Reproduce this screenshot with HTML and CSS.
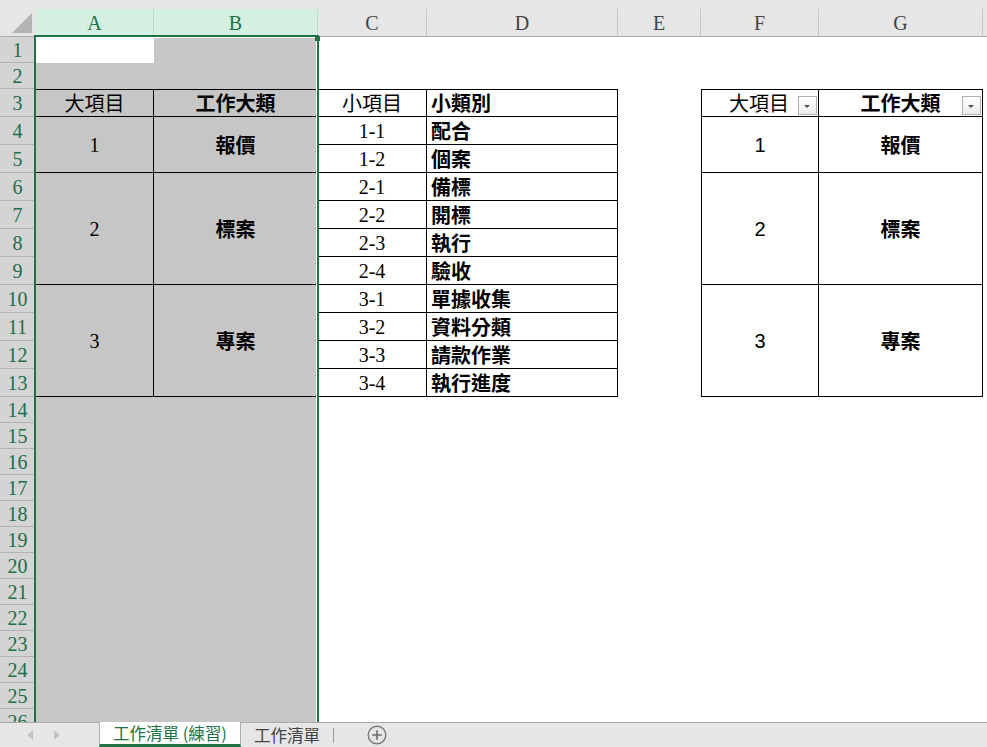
FILE: index.html
```html
<!DOCTYPE html>
<html lang="zh-Hant">
<head>
    <meta charset="UTF-8">
    <title>工作清單</title>
    <link rel="stylesheet" href="styles.css">
</head>
<body>
<div class="app">
    <div class="top-strip"></div>

    <!-- Sheet grid -->
    <div class="sheet-wrap">
        <table class="sheet">
            <colgroup>
                <col style="width:36px"><col style="width:118px"><col style="width:164px">
                <col style="width:109px"><col style="width:191px"><col style="width:83px">
                <col style="width:118px"><col style="width:164px"><col>
            </colgroup>
            <tr class="head">
                <th class="corner"><svg width="35" height="27" viewBox="0 0 35 27"><polygon points="12,24 32,24 32,4" fill="#b4b4b4"/></svg></th>
                <th class="col-sel">A</th>
                <th class="col-sel">B</th>
                <th>C</th>
                <th>D</th>
                <th>E</th>
                <th>F</th>
                <th>G</th>
                <th class="col-end"></th>
            </tr>
            <tr class="r26">
                <th class="row-num">1</th>
                <td class="active"></td><td class="sel"></td>
                <td></td><td></td><td></td><td></td><td></td><td></td>
            </tr>
            <tr class="r26">
                <th class="row-num">2</th>
                <td class="sel"></td><td class="sel"></td>
                <td></td><td></td><td></td><td></td><td></td><td></td>
            </tr>
            <tr class="r28">
                <th class="row-num">3</th>
                <td class="sel b bt ctr">大項目</td>
                <td class="sel b bt ctr strong">工作大類</td>
                <td class="b bt ctr">小項目</td>
                <td class="b bt left strong">小類別</td>
                <td></td>
                <td class="b bt bl right filtered">大項目<span class="filter-btn"></span></td>
                <td class="b bt ctr strong filtered">工作大類<span class="filter-btn"></span></td>
                <td></td>
            </tr>
            <tr class="r28">
                <th class="row-num">4</th>
                <td class="sel b ctr num" rowspan="2">1</td>
                <td class="sel b ctr strong" rowspan="2">報價</td>
                <td class="b ctr num">1-1</td>
                <td class="b left strong">配合</td>
                <td></td>
                <td class="b bl ctr sans-num" rowspan="2">1</td>
                <td class="b ctr strong" rowspan="2">報價</td>
                <td></td>
            </tr>
            <tr class="r28">
                <th class="row-num">5</th>
                <td class="b ctr num">1-2</td>
                <td class="b left strong">個案</td>
                <td></td><td></td>
            </tr>
            <tr class="r28">
                <th class="row-num">6</th>
                <td class="sel b ctr num" rowspan="4">2</td>
                <td class="sel b ctr strong" rowspan="4">標案</td>
                <td class="b ctr num">2-1</td>
                <td class="b left strong">備標</td>
                <td></td>
                <td class="b bl ctr sans-num" rowspan="4">2</td>
                <td class="b ctr strong" rowspan="4">標案</td>
                <td></td>
            </tr>
            <tr class="r28">
                <th class="row-num">7</th>
                <td class="b ctr num">2-2</td>
                <td class="b left strong">開標</td>
                <td></td><td></td>
            </tr>
            <tr class="r28">
                <th class="row-num">8</th>
                <td class="b ctr num">2-3</td>
                <td class="b left strong">執行</td>
                <td></td><td></td>
            </tr>
            <tr class="r28">
                <th class="row-num">9</th>
                <td class="b ctr num">2-4</td>
                <td class="b left strong">驗收</td>
                <td></td><td></td>
            </tr>
            <tr class="r28">
                <th class="row-num">10</th>
                <td class="sel b ctr num" rowspan="4">3</td>
                <td class="sel b ctr strong" rowspan="4">專案</td>
                <td class="b ctr num">3-1</td>
                <td class="b left strong">單據收集</td>
                <td></td>
                <td class="b bl ctr sans-num" rowspan="4">3</td>
                <td class="b ctr strong" rowspan="4">專案</td>
                <td></td>
            </tr>
            <tr class="r28">
                <th class="row-num">11</th>
                <td class="b ctr num">3-2</td>
                <td class="b left strong">資料分類</td>
                <td></td><td></td>
            </tr>
            <tr class="r28">
                <th class="row-num">12</th>
                <td class="b ctr num">3-3</td>
                <td class="b left strong">請款作業</td>
                <td></td><td></td>
            </tr>
            <tr class="r28">
                <th class="row-num">13</th>
                <td class="b ctr num">3-4</td>
                <td class="b left strong">執行進度</td>
                <td></td><td></td>
            </tr>
            <tr class="r26"><th class="row-num">14</th><td class="sel"></td><td class="sel"></td><td></td><td></td><td></td><td></td><td></td><td></td></tr>
            <tr class="r26"><th class="row-num">15</th><td class="sel"></td><td class="sel"></td><td></td><td></td><td></td><td></td><td></td><td></td></tr>
            <tr class="r26"><th class="row-num">16</th><td class="sel"></td><td class="sel"></td><td></td><td></td><td></td><td></td><td></td><td></td></tr>
            <tr class="r26"><th class="row-num">17</th><td class="sel"></td><td class="sel"></td><td></td><td></td><td></td><td></td><td></td><td></td></tr>
            <tr class="r26"><th class="row-num">18</th><td class="sel"></td><td class="sel"></td><td></td><td></td><td></td><td></td><td></td><td></td></tr>
            <tr class="r26"><th class="row-num">19</th><td class="sel"></td><td class="sel"></td><td></td><td></td><td></td><td></td><td></td><td></td></tr>
            <tr class="r26"><th class="row-num">20</th><td class="sel"></td><td class="sel"></td><td></td><td></td><td></td><td></td><td></td><td></td></tr>
            <tr class="r26"><th class="row-num">21</th><td class="sel"></td><td class="sel"></td><td></td><td></td><td></td><td></td><td></td><td></td></tr>
            <tr class="r26"><th class="row-num">22</th><td class="sel"></td><td class="sel"></td><td></td><td></td><td></td><td></td><td></td><td></td></tr>
            <tr class="r26"><th class="row-num">23</th><td class="sel"></td><td class="sel"></td><td></td><td></td><td></td><td></td><td></td><td></td></tr>
            <tr class="r26"><th class="row-num">24</th><td class="sel"></td><td class="sel"></td><td></td><td></td><td></td><td></td><td></td><td></td></tr>
            <tr class="r26"><th class="row-num">25</th><td class="sel"></td><td class="sel"></td><td></td><td></td><td></td><td></td><td></td><td></td></tr>
            <tr class="r26"><th class="row-num">26</th><td class="sel"></td><td class="sel"></td><td></td><td></td><td></td><td></td><td></td><td></td></tr>
        </table>

        <!-- selection outline over columns A:B -->
        <div class="selection"></div>
    </div>

    <!-- Sheet tabs -->
    <div class="tabbar">
        <div class="tab-nav">
            <svg width="8" height="10" viewBox="0 0 8 10"><polygon points="7,0 7,10 1,5" fill="#c3c3c3"/></svg>
            <svg width="8" height="10" viewBox="0 0 8 10"><polygon points="1,0 1,10 7,5" fill="#c3c3c3"/></svg>
        </div>
        <div class="tab active-tab">工作清單 (練習)</div>
        <div class="tab">工作清單</div>
        <div class="tab-sep"></div>
        <div class="add-sheet">
            <svg width="20" height="20" viewBox="0 0 20 20">
                <circle cx="10" cy="10" r="8.8" fill="none" stroke="#7a7a7a" stroke-width="1.4"/>
                <path d="M10 5.2V14.8M5.2 10H14.8" stroke="#6a6a6a" stroke-width="1.6"/>
            </svg>
        </div>
    </div>
</div>
</body>
</html>
```

FILE: styles.css
```css
* {
    box-sizing: border-box;
}
body {
    margin: 0;
    overflow: hidden;
    background: #fff;
    font-family: "Noto Sans CJK TC", sans-serif;
}
.app {
    display: flex;
    flex-direction: column;
    height: 747px;
}
.top-strip {
    flex: none;
    height: 9px;
    background: #e6e6e6;
}
.sheet-wrap {
    position: relative;
    flex: 1;
    overflow: hidden;
}
.sheet {
    width: 987px;
    table-layout: fixed;
    border-collapse: separate;
    border-spacing: 0;
}

/* column letters */
.head th {
    height: 27px;
    padding: 0;
    background: #e6e6e6;
    border-right: 1px solid #c6c6c6;
    border-bottom: 1px solid #ababab;
    font: normal 20px/24px "Liberation Serif", serif;
    color: #444;
    vertical-align: middle;
}
.head th.corner {
    border-right: none;
    line-height: 0;
    text-align: left;
}
.head th.col-sel {
    background: #d3f0e0;
    color: #217346;
    border-right-color: #b9dcc7;
}
.head th.col-end {
    border-right: none;
}

/* row numbers */
.row-num {
    padding: 0 1px 0 0;
    background: #d4d4d4;
    border-bottom: 1px solid #b3b3b3;
    font: normal 20px/22px "Liberation Serif", serif;
    color: #1e6e4a;
    text-align: center;
    vertical-align: middle;
}
.r26 {
    height: 26px;
}
.r28 {
    height: 28px;
}

/* cells */
td {
    padding: 0 4px;
    font-size: 20px;
    line-height: 22px;
    color: #000;
    vertical-align: middle;
    white-space: nowrap;
}
td.sel {
    background: #c6c6c6;
}
td.active {
    background: #fff;
}
td.b {
    border-right: 1px solid #000;
    border-bottom: 1px solid #000;
}
td.bt {
    border-top: 1px solid #000;
}
td.bl {
    border-left: 1px solid #000;
}
.ctr {
    text-align: center;
}
.left {
    text-align: left;
}
.right {
    text-align: right;
}
.strong {
    font-weight: 700;
}
.num {
    font-family: "Liberation Serif", serif;
}
.sans-num {
    font-family: "Liberation Sans", sans-serif;
}
td.filtered {
    position: relative;
}
td.filtered.right {
    padding-right: 29px;
}
.filter-btn {
    position: absolute;
    right: 1px;
    bottom: 1px;
    width: 19px;
    height: 19px;
    border: 1px solid #b1b1b1;
    background: linear-gradient(#ffffff, #ececec);
}
.filter-btn::after {
    content: "";
    position: absolute;
    left: 5px;
    top: 8px;
    border-left: 3.5px solid transparent;
    border-right: 3.5px solid transparent;
    border-top: 3.5px solid #555;
}

/* selection outline */
.selection {
    position: absolute;
    left: 34px;
    top: 26px;
    width: 285px;
    height: 760px;
    border: 2px solid #217346;
    box-shadow: inset -1px 1px 0 #fff;
    pointer-events: none;
}
.selection::after {
    content: "";
    position: absolute;
    right: -3px;
    top: -1px;
    width: 5px;
    height: 5px;
    background: #217346;
}

/* sheet tabs */
.tabbar {
    flex: none;
    display: flex;
    align-items: stretch;
    height: 25px;
    background: #e6e6e6;
    border-top: 1px solid #ababab;
}
.tab-nav {
    width: 99px;
    display: flex;
    align-items: center;
    gap: 19px;
    padding-left: 26px;
}
.tab {
    display: flex;
    align-items: center;
    padding: 0 13px;
    font-size: 16.5px;
    color: #444;
}
.active-tab {
    width: 142px;
    margin-top: -1px;
    justify-content: center;
    background: #fff;
    color: #217346;
    border-left: 1px solid #ababab;
    border-right: 1px solid #ababab;
    border-bottom: 3px solid #217346;
}
.tab-sep {
    width: 1px;
    margin: 5px 0 4px;
    background: #9a9a9a;
}
.add-sheet {
    display: flex;
    align-items: center;
    padding-left: 33px;
}
```
